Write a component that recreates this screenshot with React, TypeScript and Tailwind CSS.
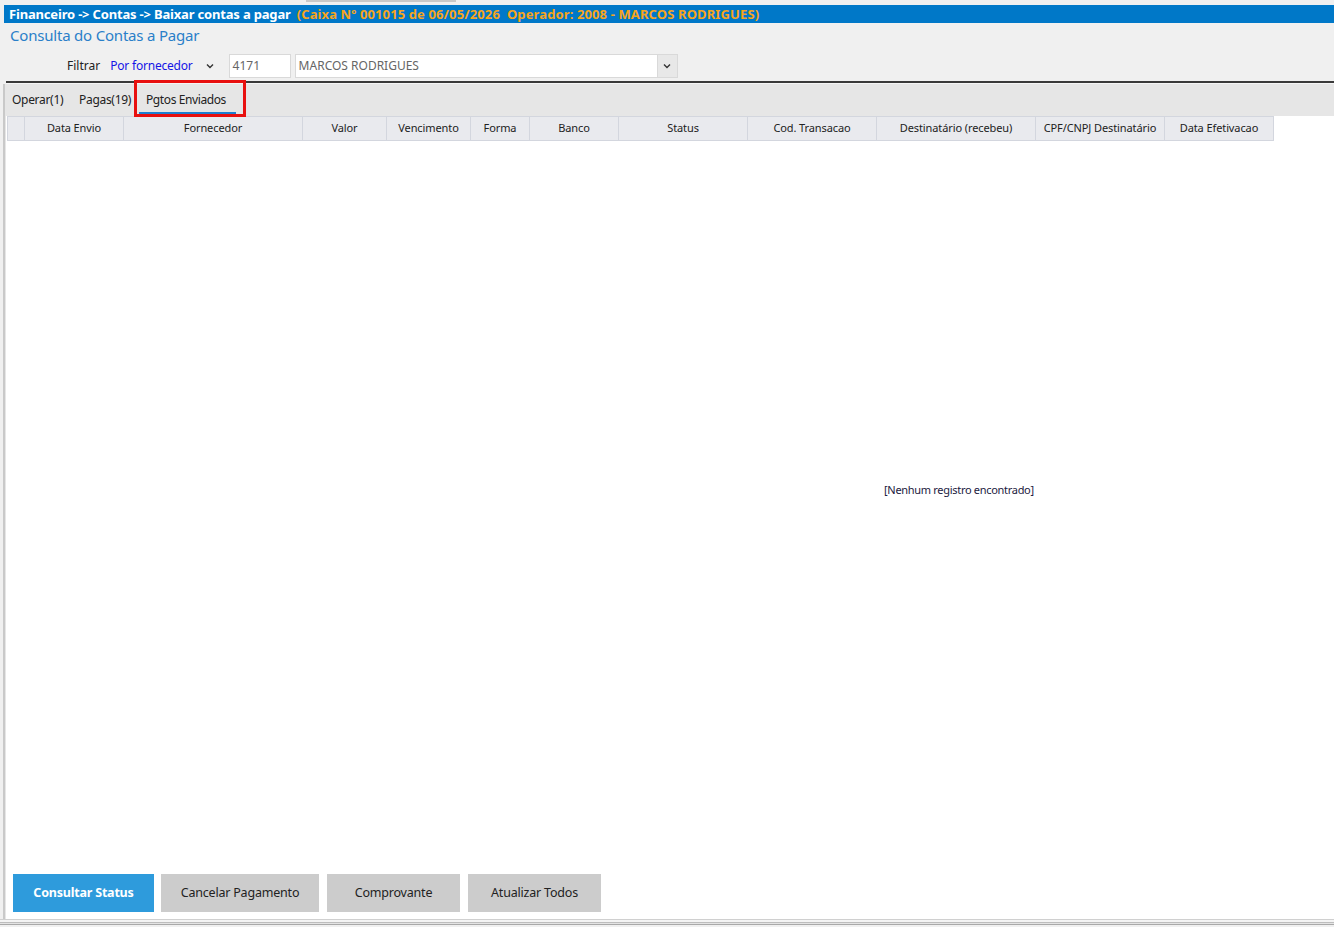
const cols: { label: string; w: number }[] = [
  { label: "", w: 18 },
  { label: "Data Envio", w: 99 },
  { label: "Fornecedor", w: 179 },
  { label: "Valor", w: 84 },
  { label: "Vencimento", w: 84 },
  { label: "Forma", w: 59 },
  { label: "Banco", w: 89 },
  { label: "Status", w: 129 },
  { label: "Cod. Transacao", w: 129 },
  { label: "Destinatário (recebeu)", w: 159 },
  { label: "CPF/CNPJ Destinatário", w: 129 },
  { label: "Data Efetivacao", w: 109 },
];

const Chevron = () => (
  <svg width="10" height="10" viewBox="0 0 10 10" className="text-[#333]">
    <path d="M2 3.5 L5 6.5 L8 3.5" fill="none" stroke="currentColor" strokeWidth="1.4" />
  </svg>
);

export default function App() {
  return (
    <div
      className="w-[1334px] h-[927px] bg-[#f0f0f0] flex flex-col overflow-hidden text-[12px] text-[#222]"
      style={{ fontFamily: '"Noto Sans", "Open Sans", sans-serif' }}
    >
      {/* faixa superior */}
      <div className="h-[5px] flex">
        <div className="w-[306px]" />
        <div className="w-[150px] h-[2px] bg-[#c8c8c8]" />
      </div>

      {/* titulo */}
      <div className="ml-[4px] h-[18px] bg-[#0078c8] flex items-center pl-[5px] text-[13px] font-bold leading-none whitespace-nowrap">
        <span className="text-white tracking-[-0.18px]">Financeiro -&gt; Contas -&gt; Baixar contas a pagar</span>
        <span className="ml-[6px] text-[#f7a51c] tracking-[0.12px]">
          (Caixa Nº 001015 de 06/05/2026&nbsp; Operador: 2008 - MARCOS RODRIGUES)
        </span>
      </div>

      <div className="ml-[10px] mt-[2px] text-[15px] leading-[20px] text-[#2a7fc9] tracking-[-0.2px]">
        Consulta do Contas a Pagar
      </div>

      {/* filtro */}
      <div className="mt-[9px] h-[24px] flex items-center">
        <span className="ml-[67px] text-[#222]">Filtrar</span>
        <span className="ml-[10px] text-[#1515e6] tracking-[-0.2px]">Por fornecedor</span>
        <span className="ml-[12px] mr-[14px]">
          <Chevron />
        </span>
        <div className="w-[62px] h-[24px] bg-white border border-[#d9d9d9] flex items-center pl-[3px] text-[#666]">
          4171
        </div>
        <div className="ml-[4px] w-[383px] h-[24px] bg-white border border-[#d9d9d9] flex items-center">
          <span className="flex-1 pl-[3px] text-[#666]">MARCOS RODRIGUES</span>
          <div className="w-[20px] h-full bg-[#e8e8e8] border-l border-[#d9d9d9] flex items-center justify-center">
            <Chevron />
          </div>
        </div>
      </div>

      {/* linha divisoria */}
      <div className="ml-[6px] mt-[3px] h-[2px] bg-[#3a3a3a]" />
      <div className="ml-[6px] h-[1px] bg-[#f5f5f5]" />

      <div className="flex-1 flex flex-col border-l-[2px] border-[#c9c9c9] ml-[3px] min-h-0">
        <div className="flex-1 flex flex-col border-l border-[#e6e6e6] min-h-0">
          {/* abas */}
          <div className="h-[32px] bg-[#e6e6e6] flex items-center relative">
            <span className="ml-[6px] w-[67px] tracking-[-0.3px]">Operar(1)</span>
            <span className="w-[67px] tracking-[-0.3px]">Pagas(19)</span>
            <span className="relative h-full flex items-center tracking-[-0.4px]">
              Pgtos Enviados
              <span className="absolute left-[-7px] w-[97px] bottom-[2px] h-[2px] bg-[#1f7fd0]" />
            </span>
            <div className="absolute left-[128px] top-[-4px] w-[112px] h-[37px] border-[3px] border-[#e8100f] pointer-events-none" />
          </div>

          {/* tabela */}
          <div className="flex-1 bg-white flex flex-col min-h-0">
            <div className="flex ml-[1px]">
              {cols.map((c, i) => (
                <div
                  key={i}
                  style={{ width: c.w }}
                  className="h-[25px] bg-[#e9eaee] border border-l-0 first:border-l border-[#d3d6de] flex items-center justify-center text-[11px] text-[#222] shrink-0 tracking-[-0.1px]"
                >
                  {c.label}
                </div>
              ))}
            </div>
            <div className="flex-1 flex flex-col">
              <div className="h-[341px]" />
              <div className="ml-[878px] text-[11px] text-[#222040] tracking-[-0.3px]">
                [Nenhum registro encontrado]
              </div>
              <div className="flex-1" />
              <div className="flex gap-[7px] ml-[7px] mb-[7px]">
                <button className="w-[141px] h-[38px] bg-[#2e9bdc] text-white font-bold text-[12.5px] tracking-[-0.2px]">
                  Consultar Status
                </button>
                <button className="w-[158px] h-[38px] bg-[#cccccc] text-[#222] text-[12.5px] tracking-[-0.2px]">
                  Cancelar Pagamento
                </button>
                <button className="ml-[1px] w-[133px] h-[38px] bg-[#cccccc] text-[#222] text-[12.5px] tracking-[-0.2px]">
                  Comprovante
                </button>
                <button className="ml-[1px] w-[133px] h-[38px] bg-[#cccccc] text-[#222] text-[12.5px] tracking-[-0.2px]">
                  Atualizar Todos
                </button>
              </div>
            </div>
          </div>
        </div>
      </div>

      {/* rodape */}
      <div className="h-[8px] flex flex-col">
        <div className="h-[1px] bg-[#d0d0d0]" />
        <div className="h-[2px] bg-[#f4f4f4]" />
        <div className="h-[1px] bg-[#bdbdbd]" />
        <div className="h-[1px] bg-[#e4e4e4]" />
        <div className="h-[1px] bg-[#a9a9a9]" />
        <div className="h-[2px] bg-[#f0f0f0]" />
      </div>
    </div>
  );
}
